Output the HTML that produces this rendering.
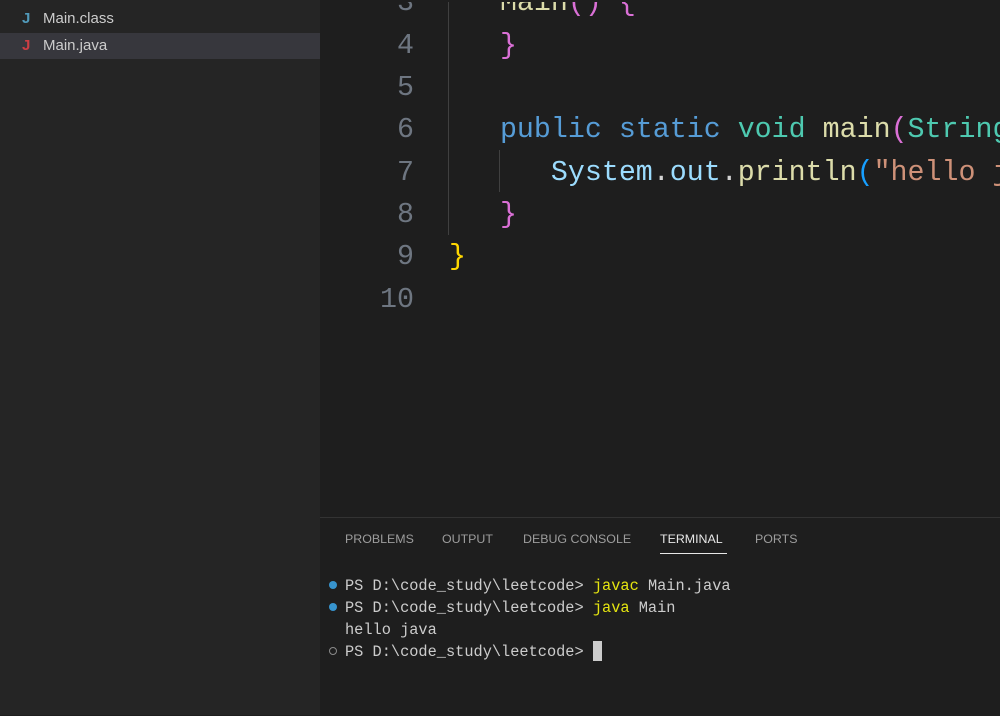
<!DOCTYPE html>
<html><head><style>
body{margin:0;width:1000px;height:715px;overflow:hidden;background:#1e1e1e;position:relative;font-family:"Liberation Sans",sans-serif}
.side{position:absolute;left:0;top:0;width:320px;height:715px;background:#252525}
.row{position:absolute;left:0;width:320px;height:26px;line-height:26px;font-size:15px;color:#cccccc}
.row b{position:absolute;left:22px;font-weight:bold;font-size:15px}
.row span{position:absolute;left:43px}
.code{position:absolute;left:0;top:2px;width:1000px;height:500px;overflow:hidden;font-family:"Liberation Mono",monospace;font-size:28.3px}
.ln{position:absolute;width:414px;text-align:right;color:#6e7681;height:42px;line-height:42px}
.tx{position:absolute;left:449px;height:42px;line-height:42px;white-space:pre;color:#d4d4d4}
.guide{position:absolute;width:1px;background:#404040}
.panel{position:absolute;left:320px;top:517px;width:680px;height:198px;background:#1e1e1e;border-top:1px solid #333}
.tab{position:absolute;top:14px;font-size:12.4px;color:#9d9d9d;font-family:"Liberation Sans",sans-serif}
.term{position:absolute;left:25px;font-family:"Liberation Mono",monospace;font-size:15.3px;color:#cccccc;white-space:pre;height:22px;line-height:22px}
.dot{position:absolute;left:9px;width:8px;height:8px;border-radius:50%;background:#3794ce}
.y{color:#e5e510}
</style></head><body>
<div class="side">
<div class="row" style="top:6px"><b style="color:#519aba">J</b><span>Main.class</span></div>
<div class="row" style="top:33px;background:#37373d"><b style="color:#cc3e44">J</b><span>Main.java</span></div>
</div>
<div class="code">
<div class="guide" style="left:448px;top:0;height:233px"></div>
<div class="guide" style="left:499px;top:148px;height:42px"></div>
<div class="ln" style="top:-20px">3</div><div class="tx" style="top:-20px">   <span style="color:#dcdcaa">Main</span><span style="color:#da70d6">()</span> <span style="color:#da70d6">{</span></div>
<div class="ln" style="top:23px">4</div><div class="tx" style="top:23px">   <span style="color:#da70d6">}</span></div>
<div class="ln" style="top:65px">5</div>
<div class="ln" style="top:107px">6</div><div class="tx" style="top:107px">   <span style="color:#569cd6">public static</span> <span style="color:#4ec9b0">void</span> <span style="color:#dcdcaa">main</span><span style="color:#da70d6">(</span><span style="color:#4ec9b0">String</span></div>
<div class="ln" style="top:150px">7</div><div class="tx" style="top:150px">      <span style="color:#9cdcfe">System</span>.<span style="color:#9cdcfe">out</span>.<span style="color:#dcdcaa">println</span><span style="color:#179fff">(</span><span style="color:#ce9178">"hello java"</span></div>
<div class="ln" style="top:192px">8</div><div class="tx" style="top:192px">   <span style="color:#da70d6">}</span></div>
<div class="ln" style="top:234px">9</div><div class="tx" style="top:234px"><span style="color:#ffd700">}</span></div>
<div class="ln" style="top:277px">10</div>
</div>
<div class="panel">
<div class="tab" style="left:25px">PROBLEMS</div>
<div class="tab" style="left:122px">OUTPUT</div>
<div class="tab" style="left:203px">DEBUG CONSOLE</div>
<div class="tab" style="left:340px;color:#e7e7e7">TERMINAL</div>
<div style="position:absolute;left:340px;top:35px;width:67px;height:1px;background:#e7e7e7"></div>
<div class="tab" style="left:435px">PORTS</div>
<div class="dot" style="top:63px"></div>
<div class="term" style="top:57px">PS D:\code_study\leetcode&gt; <span class="y">javac</span> Main.java</div>
<div class="dot" style="top:85px"></div>
<div class="term" style="top:79px">PS D:\code_study\leetcode&gt; <span class="y">java</span> Main</div>
<div class="term" style="top:101px">hello java</div>
<div class="dot" style="top:129px;background:none;border:1px solid #8a8a8a;width:6px;height:6px"></div>
<div class="term" style="top:123px">PS D:\code_study\leetcode&gt; </div>
<div style="position:absolute;left:273px;top:123px;width:9px;height:20px;background:#cccccc"></div>
</div>
</body></html>
